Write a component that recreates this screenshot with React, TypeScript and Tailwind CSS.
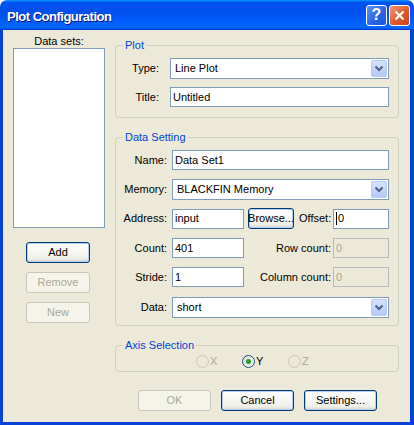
import React from 'react';

// Windows XP style "Plot Configuration" dialog

function Edit({ value, className = '', disabled = false, caret = false }: { value: string; className?: string; disabled?: boolean; caret?: boolean }) {
  return (
    <div
      className={`h-[20px] flex items-center pl-[2px] border ${
        disabled ? 'border-[#B8BCC0] bg-[#ECE9D8] text-[#ACA899]' : 'border-[#7F9DB9] bg-white text-black'
      } ${className}`}
    >
      {caret && <span className="w-px h-[13px] bg-black mr-px" />}
      <span>{value}</span>
    </div>
  );
}

function Combo({ value }: { value: string }) {
  return (
    <div className="flex-1 h-[21px] flex items-center border border-[#7F9DB9] bg-white">
      <span className="flex-1 pl-[4px]">{value}</span>
      <div className="w-[16px] h-[17px] mr-px rounded-[2px] border border-[#B9CBF3] bg-[linear-gradient(180deg,#D6E2FD,#B5C8F6)] flex items-center justify-center">
        <svg width="10" height="7" viewBox="0 0 10 7">
          <path d="M1.5 1.5 L5 5 L8.5 1.5" fill="none" stroke="#4D6185" strokeWidth="2" />
        </svg>
      </div>
    </div>
  );
}

function Button({ label, className = '', disabled = false, focused = false }: { label: string; className?: string; disabled?: boolean; focused?: boolean }) {
  return (
    <div
      className={`h-[21px] flex items-center justify-center rounded-[3px] border ${
        disabled
          ? 'border-[#C9C7BA] bg-[#F5F4EA] text-[#ACA899]'
          : `border-[#003C74] bg-[linear-gradient(180deg,#FFFFFF,#F0F0EA_80%,#D8D4C8)] text-black ${
              focused ? 'shadow-[inset_0_0_0_1px_#B4CDF5]' : 'shadow-[inset_0_-1px_0_#D6D0C5]'
            }`
      } ${className}`}
    >
      {label}
    </div>
  );
}

function Radio({ label, checked = false, disabled = false }: { label: string; checked?: boolean; disabled?: boolean }) {
  return (
    <div className="w-[46px] flex items-center">
      <span
        className={`w-[13px] h-[13px] rounded-full border flex items-center justify-center ${
          disabled ? 'border-[#CAC8BB]' : 'border-[#1C5180] bg-[linear-gradient(135deg,#DCDCD7,#FFFFFF)]'
        }`}
      >
        {checked && <span className="w-[5px] h-[5px] rounded-full bg-[#21A121]" />}
      </span>
      <span className={`ml-px leading-[13px] ${disabled ? 'text-[#ACA899]' : 'text-black'}`}>{label}</span>
    </div>
  );
}

function Group({ title, className = '', children }: { title: string; className?: string; children: React.ReactNode }) {
  return (
    <fieldset className={`border border-[#D0D0BF] rounded-[4px] ${className}`}>
      <legend className="ml-[7px] px-[2px] leading-[13px] text-[#0046D5]">{title}</legend>
      {children}
    </fieldset>
  );
}

export default function App() {
  return (
    <div className="w-[414px] h-[425px] flex flex-col font-['Liberation_Sans',Arial,sans-serif] text-[11px] text-black">
      {/* Title bar */}
      <div className="h-[30px] shrink-0 rounded-t-[7px] flex items-center pl-[7px] pr-[4px] bg-[linear-gradient(180deg,#0997FF_0%,#0053EE_8%,#0050EE_40%,#0066FF_88%,#0066FF_93%,#005BFF_95%,#003DD7_96%,#003DD7_100%)]">
        <span className="flex-1 pt-[4px] text-[13px] tracking-[-0.5px] font-bold text-white [text-shadow:1px_1px_#0F1089]">
          Plot Configuration
        </span>
        <div className="w-[21px] h-[21px] rounded-[3px] border border-white bg-[linear-gradient(135deg,#5C93F7,#2663E5_60%,#1C55D8)] flex items-center justify-center text-white font-bold text-[16px] leading-none">
          ?
        </div>
        <div className="ml-[2px] w-[21px] h-[21px] rounded-[3px] border border-white bg-[linear-gradient(135deg,#F09A7C,#E2572B_55%,#C9401C)] flex items-center justify-center">
          <svg width="11" height="11" viewBox="0 0 11 11">
            <path d="M1.5 1.5 L9.5 9.5 M9.5 1.5 L1.5 9.5" stroke="white" strokeWidth="2.2" />
          </svg>
        </div>
      </div>

      {/* Client area */}
      <div className="flex-1 flex bg-[#ECE9D8] border-l-[3px] border-r-[4px] border-b-[3px] border-[#0842D6]">
        {/* Left column */}
        <div className="ml-[10px] w-[92px] pt-[5px] flex flex-col">
          <div className="leading-[13px] text-center">Data sets:</div>
          <div className="h-[180px] border border-[#7F9DB9] bg-white" />
          <Button label="Add" focused className="mt-[14px] ml-[13px] w-[64px]" />
          <Button label="Remove" disabled className="mt-[9px] ml-[13px] w-[64px]" />
          <Button label="New" disabled className="mt-[9px] ml-[13px] w-[64px]" />
        </div>

        {/* Right column */}
        <div className="ml-[10px] mr-[11px] flex-1 pt-[9px] flex flex-col">
          <Group title="Plot" className="pt-[6px] pb-[10px] pr-[9px]">
            <div className="flex items-center h-[21px]">
              <span className="w-[43px] text-right">Type:</span>
              <div className="ml-[11px] flex-1 flex">
                <Combo value="Line Plot" />
              </div>
            </div>
            <div className="mt-[8px] flex items-center h-[20px]">
              <span className="w-[43px] text-right">Title:</span>
              <Edit value="Untitled" className="ml-[11px] flex-1" />
            </div>
          </Group>

          <Group title="Data Setting" className="mt-[13px] pt-[6px] pb-[7px] pr-[9px]">
            <div className="flex items-center h-[20px]">
              <span className="w-[51px] text-right">Name:</span>
              <Edit value="Data Set1" className="ml-[5px] flex-1" />
            </div>
            <div className="mt-[9px] flex items-center h-[21px]">
              <span className="w-[51px] text-right">Memory:</span>
              <div className="ml-[5px] flex-1 flex">
                <Combo value="BLACKFIN Memory" />
              </div>
            </div>
            <div className="mt-[8px] flex items-center h-[21px]">
              <span className="w-[51px] text-right">Address:</span>
              <Edit value="input" className="ml-[5px] w-[72px]" />
              <Button label="Browse..." focused className="ml-[4px] w-[46px]" />
              <span className="ml-[5px] w-[30px]">Offset:</span>
              <Edit value="0" caret className="ml-[4px] flex-1" />
            </div>
            <div className="mt-[9px] flex items-center h-[20px]">
              <span className="w-[51px] text-right">Count:</span>
              <Edit value="401" className="ml-[5px] w-[72px]" />
              <span className="flex-1 text-right">Row count:</span>
              <Edit value="0" disabled className="ml-[2px] w-[56px]" />
            </div>
            <div className="mt-[9px] flex items-center h-[20px]">
              <span className="w-[51px] text-right">Stride:</span>
              <Edit value="1" className="ml-[5px] w-[72px]" />
              <span className="flex-1 text-right">Column count:</span>
              <Edit value="0" disabled className="ml-[2px] w-[56px]" />
            </div>
            <div className="mt-[10px] flex items-center h-[21px]">
              <span className="w-[51px] text-right">Data:</span>
              <div className="ml-[5px] flex-1 flex">
                <Combo value="short" />
              </div>
            </div>
          </Group>

          <Group title="Axis Selection" className="mt-[13px] pt-[3px] pb-[3px]">
            <div className="h-[13px] flex ml-[80px]">
              <Radio label="X" disabled />
              <Radio label="Y" checked />
              <Radio label="Z" disabled />
            </div>
          </Group>

          <div className="mt-[18px] ml-[23px] flex gap-[10px]">
            <Button label="OK" disabled className="w-[73px]" />
            <Button label="Cancel" focused className="w-[73px]" />
            <Button label="Settings..." focused className="w-[73px]" />
          </div>
        </div>
      </div>
    </div>
  );
}
